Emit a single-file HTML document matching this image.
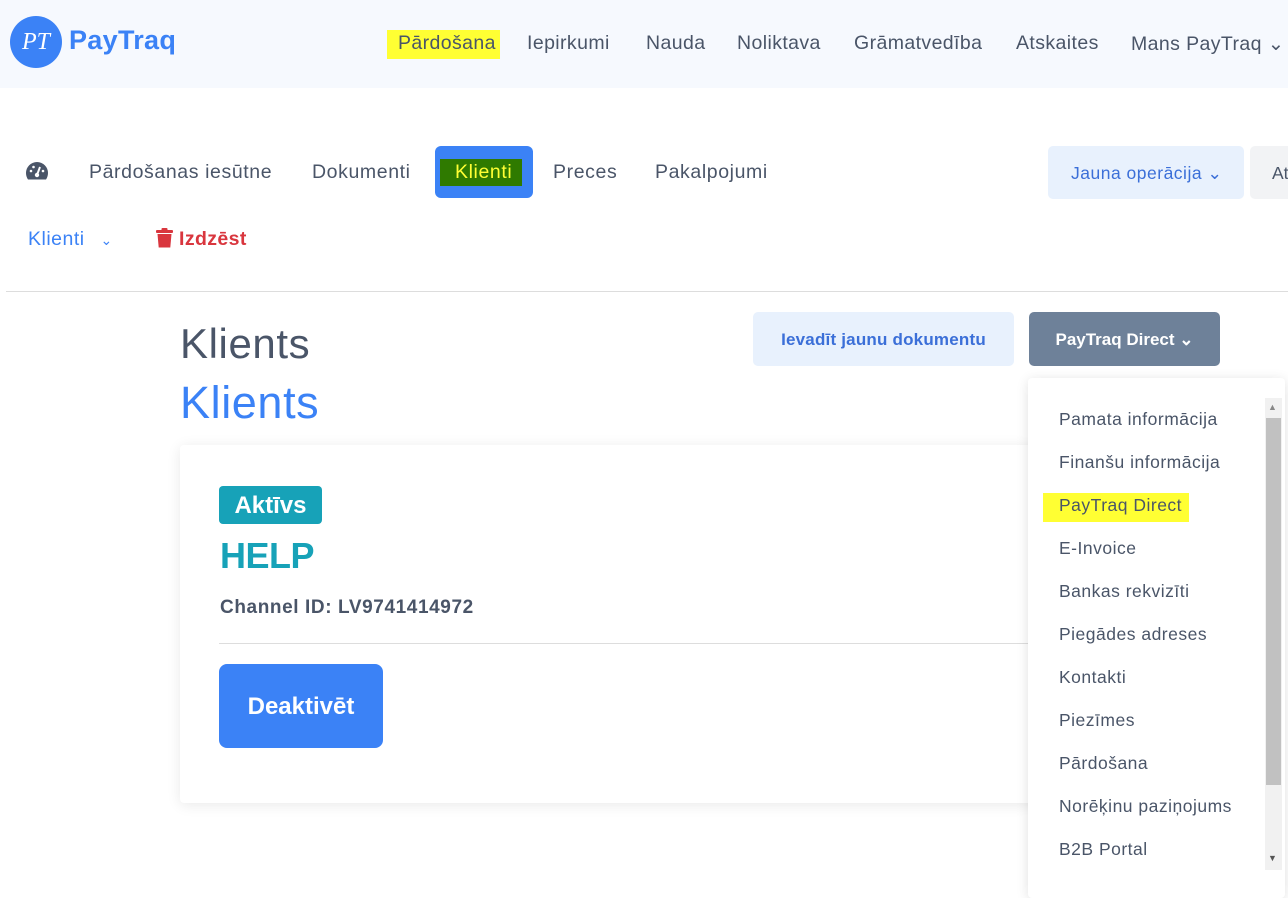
<!DOCTYPE html>
<html><head><meta charset="utf-8"><style>
*{margin:0;padding:0;box-sizing:border-box}
body{width:1288px;height:885px;overflow:hidden;background:#fff;font-family:"Liberation Sans",sans-serif;color:#4a5568;position:relative}
.a{position:absolute;white-space:nowrap}
.hdr{position:absolute;left:0;top:0;width:1288px;height:88px;background:#f6f9fe}
.nav{font-size:19.5px;color:#4a5568;top:32px;letter-spacing:0.4px}
.tab{font-size:19.5px;color:#4a5568;top:161px;letter-spacing:0.6px}
.dd{font-size:17.5px;color:#4a5568;left:1059px;letter-spacing:0.5px}
</style></head><body>
<div class="hdr"></div>
<div class="a" style="left:10px;top:16px;width:52px;height:52px;border-radius:50%;background:#3b82f6;color:#fff;font:italic 24px 'Liberation Serif',serif;text-align:center;line-height:52px">PT</div>
<div class="a" style="left:69px;top:25px;font-size:27px;font-weight:bold;color:#3b82f6;letter-spacing:0.3px">PayTraq</div>
<div class="a" style="left:387px;top:30px;width:113px;height:29px;background:#ffff33"></div>
<div class="a nav" style="left:398px">Pārdošana</div>
<div class="a nav" style="left:527px">Iepirkumi</div>
<div class="a nav" style="left:646px">Nauda</div>
<div class="a nav" style="left:737px">Noliktava</div>
<div class="a nav" style="left:854px">Grāmatvedība</div>
<div class="a nav" style="left:1016px">Atskaites</div>
<div class="a nav" style="left:1131px">Mans PayTraq ⌄</div>

<svg class="a" style="left:25px;top:161px" width="24" height="20" viewBox="0 0 24 20"><path d="M12 1A11 11 0 0 0 1 12c0 2.5.8 4.7 2 6.5h18c1.2-1.8 2-4 2-6.5A11 11 0 0 0 12 1z" fill="#4a5568"/><circle cx="12" cy="14" r="2.2" fill="#fff"/><path d="M12 14l3-8" stroke="#fff" stroke-width="2"/><circle cx="6" cy="10" r="1.3" fill="#fff"/><circle cx="8.5" cy="6" r="1.3" fill="#fff"/><circle cx="18" cy="10" r="1.3" fill="#fff"/></svg>
<div class="a tab" style="left:89px">Pārdošanas iesūtne</div>
<div class="a tab" style="left:312px">Dokumenti</div>
<div class="a" style="left:435px;top:146px;width:98px;height:52px;background:#3b82f6;border-radius:6px"></div>
<div class="a" style="left:440px;top:159px;width:82px;height:27px;background:#2f7a00"></div>
<div class="a tab" style="left:455px;color:#ffff33">Klienti</div>
<div class="a tab" style="left:553px">Preces</div>
<div class="a tab" style="left:655px">Pakalpojumi</div>
<div class="a" style="left:1048px;top:146px;width:196px;height:53px;background:#e8f1fd;border-radius:5px;color:#3b6fd8;font-size:17.5px;letter-spacing:0.5px;line-height:55px;padding-left:23px">Jauna operācija ⌄</div>
<div class="a" style="left:1250px;top:146px;width:60px;height:53px;background:#f2f3f5;border-radius:5px;font-size:17.5px;line-height:55px;padding-left:22px">At</div>

<div class="a" style="left:28px;top:228px;font-size:19.5px;color:#3b82f6;letter-spacing:0.5px">Klienti <span style="font-size:14px;margin-left:10px">⌄</span></div>
<svg class="a" style="left:156px;top:228px" width="17" height="20" viewBox="0 0 17 20"><rect x="0" y="2" width="17" height="3" rx="1" fill="#d9363e"/><rect x="5.5" y="0" width="6" height="3" rx="1" fill="#d9363e"/><path d="M1.5 6h14l-1.2 13.5H2.7z" fill="#d9363e"/></svg>
<div class="a" style="left:179px;top:228px;font-size:19.5px;font-weight:bold;color:#d9363e;letter-spacing:0.4px">Izdzēst</div>
<div class="a" style="left:6px;top:291px;width:1282px;height:1px;background:#ddd"></div>

<div class="a" style="left:180px;top:320px;font-size:42px;color:#4a5568;letter-spacing:0.6px">Klients</div>
<div class="a" style="left:180px;top:377px;font-size:45px;color:#3b82f6;letter-spacing:0.6px">Klients</div>
<div class="a" style="left:753px;top:312px;width:261px;height:54px;background:#e8f1fd;border-radius:5px;color:#3b6fd8;font-size:17px;font-weight:bold;line-height:56px;text-align:center;letter-spacing:0.2px">Ievadīt jaunu dokumentu</div>
<div class="a" style="left:1029px;top:312px;width:191px;height:54px;background:#6e8199;border-radius:5px;color:#fff;font-size:17px;font-weight:bold;line-height:56px;text-align:center">PayTraq Direct ⌄</div>

<div class="a" style="left:180px;top:445px;width:880px;height:358px;background:#fff;box-shadow:0 2px 14px rgba(0,0,0,.09);border-radius:4px"></div>
<div class="a" style="left:219px;top:486px;width:103px;height:38px;background:#17a2b8;border-radius:4px;color:#fff;font-size:24px;font-weight:bold;line-height:40px;text-align:center">Aktīvs</div>
<div class="a" style="left:220px;top:535px;font-size:36px;color:#17a2b8;font-weight:bold;letter-spacing:-0.5px">HELP</div>
<div class="a" style="left:220px;top:597px;font-size:19px;font-weight:bold;color:#4a5568;letter-spacing:0.6px">Channel ID: LV9741414972</div>
<div class="a" style="left:219px;top:643px;width:820px;height:1px;background:#ddd"></div>
<div class="a" style="left:219px;top:664px;width:164px;height:84px;background:#3b82f6;border-radius:8px;color:#fff;font-size:24px;font-weight:bold;line-height:86px;text-align:center">Deaktivēt</div>

<div class="a" style="left:1028px;top:378px;width:257px;height:520px;background:#fff;box-shadow:0 2px 12px rgba(0,0,0,.12);border-radius:4px"></div>
<div class="a" style="left:1265px;top:398px;width:17px;height:472px;background:#f1f1f1"></div>
<div class="a" style="left:1266px;top:418px;width:15px;height:367px;background:#c1c1c1"></div>
<div class="a" style="left:1268px;top:402px;font-size:9px;color:#888">▲</div>
<div class="a" style="left:1268px;top:853px;font-size:9px;color:#555">▼</div>
<div class="a" style="left:1043px;top:493px;width:146px;height:29px;background:#ffff33"></div>
<div class="a dd" style="top:409px">Pamata informācija</div>
<div class="a dd" style="top:452px">Finanšu informācija</div>
<div class="a dd" style="top:495px">PayTraq Direct</div>
<div class="a dd" style="top:538px">E-Invoice</div>
<div class="a dd" style="top:581px">Bankas rekvizīti</div>
<div class="a dd" style="top:624px">Piegādes adreses</div>
<div class="a dd" style="top:667px">Kontakti</div>
<div class="a dd" style="top:710px">Piezīmes</div>
<div class="a dd" style="top:753px">Pārdošana</div>
<div class="a dd" style="top:796px">Norēķinu paziņojums</div>
<div class="a dd" style="top:839px">B2B Portal</div>
</body></html>
